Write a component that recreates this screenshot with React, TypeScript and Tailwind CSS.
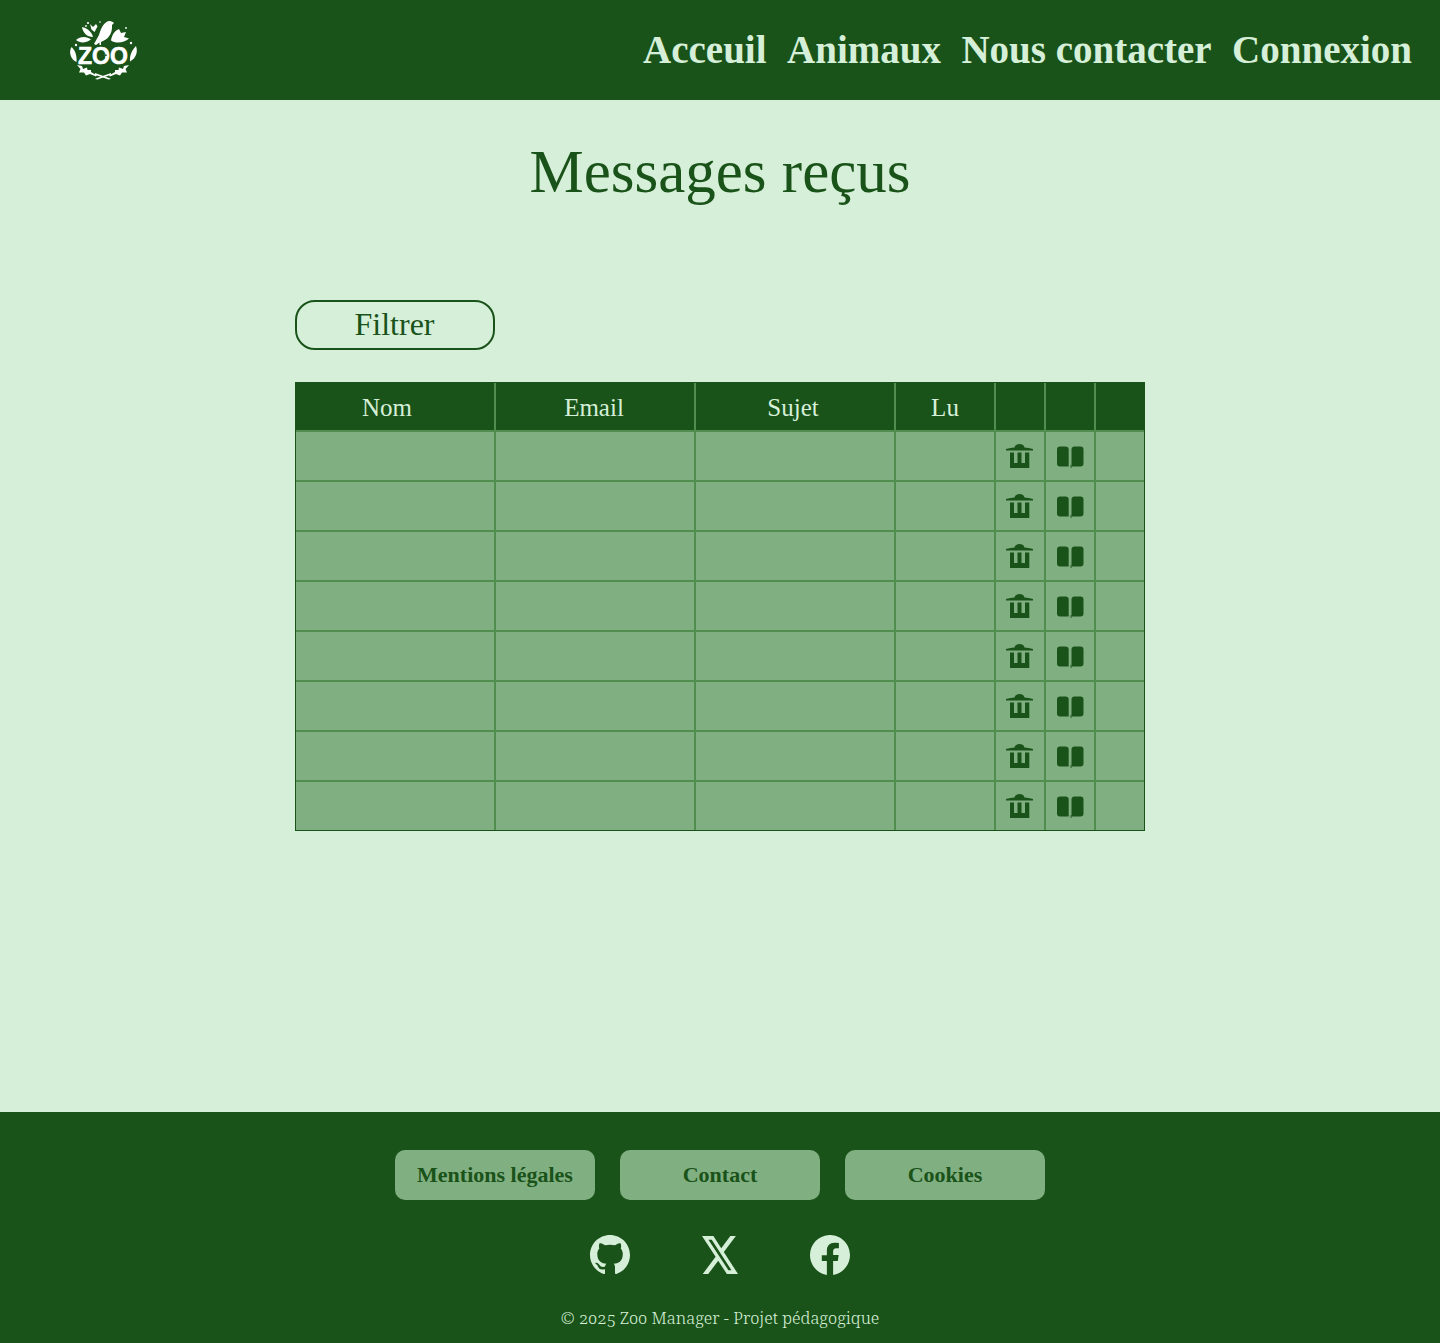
import { BsGithub, BsFacebook, BsTwitterX } from 'react-icons/bs'

const serif = 'font-["Liberation_Serif",serif]'

function Logo() {
  return (
    <svg viewBox="0 0 70 60" className="h-[60px] w-[70px]" fill="#ffffff">
      {/* bird */}
      <path d="M26 24 L31 15 C33 8 36 2 41 1 C43 0.7 45 2 46 3 L44 5 C44.5 13 41 18 36 20.5 L33 22 L33 25 L31.5 25 L31.5 22.5 L28 25 Z" />
      {/* leaves, top */}
      <path d="M14 7 C19 8 24 12 25 17 C19 17 15 13 14 7 Z" />
      <path d="M8 20 C12 16 19 16 23 19.5 C18 23 12 23.5 8 20 Z" />
      <path d="M22 4 L25 7 L28 4 L29.5 6.5 L26.5 12 L23.5 9.5 Z" />
      <path d="M43 20.5 C44 14.5 47 10.5 51 9 L53 13 L58 12 L56 17 L61 18.5 C56 23 48 24 43 20.5 Z" />
      <circle cx="20" cy="3" r="1.1" />
      <circle cx="18" cy="6" r="0.9" />
      <circle cx="32" cy="2" r="0.8" />
      <circle cx="58" cy="8" r="0.9" />
      <circle cx="8" cy="25" r="1.2" />
      <circle cx="63" cy="23" r="1.2" />
      {/* side branches */}
      <path d="M3.5 27 C7 30 9 35 8.5 42 C3.5 40 0 33 3.5 27 Z" />
      <path d="M68 26 C70.5 33 67 39 62 41.5 C61.5 35 64 30 68 26 Z" />
      {/* bottom wreath */}
      <path d="M9 45 L14 46 L15 49 L19 47.5 L19.5 50 L23 50 L23 52 L29 55.5 L28 56.5 L22 54 L18 55.5 L16 52.5 L11 52.5 L12.5 49 Z" />
      <path d="M61 45 L56 46 L55 49 L51 47.5 L50.5 50 L47 50 L47 52 L41 55.5 L42 56.5 L48 54 L52 55.5 L54 52.5 L59 52.5 L57.5 49 Z" />
      <path d="M27 53 L41 58 L43 59 L40.5 59.5 L27 54.8 Z" />
      <path d="M43 53 L29 58 L27 59 L29.5 59.5 L43 54.8 Z" />
      <text
        x="10"
        y="43.5"
        fontFamily="Liberation Sans, sans-serif"
        fontSize="23"
        fontWeight="700"
        stroke="#ffffff"
        strokeWidth="0.6"
      >
        ZOO
      </text>
      {/* paw in the first O */}
      <g fill="#1a5319">
        <ellipse cx="34.5" cy="37.2" rx="2.5" ry="2" />
        <circle cx="31.2" cy="35.2" r="0.9" />
        <circle cx="33.4" cy="33.4" r="0.9" />
        <circle cx="35.8" cy="33.4" r="0.9" />
        <circle cx="37.9" cy="35.2" r="0.9" />
      </g>
    </svg>
  )
}

function TrashIcon() {
  return (
    <svg viewBox="0 0 27 24" className="mr-[1px] h-[24px] w-[27px]" fill="#1a5319">
      <path d="M0 5 C3 4 6 3.6 8.5 3.4 C9.5 -1 17.5 -1 18.5 3.4 C21 3.6 24 4 27 5 L27 6.5 L0 6.5 Z" />
      <path d="M4 8.5 H8 V19 H11.5 V8.5 H15.5 V19 H19 V8.5 H23.3 V24 H4 Z" />
    </svg>
  )
}

function BookIcon() {
  return (
    <svg viewBox="0 0 27 22" className="mt-[1px] h-[22px] w-[27px]" fill="#1a5319">
      <path d="M3 0.5 H8.5 C10.5 0.5 11.7 1.7 11.7 3.5 V20.5 H3 C1 20.5 0 19.5 0 17.5 V3.5 C0 1.5 1 0.5 3 0.5 Z" />
      <path d="M14.5 3.5 C14.5 1.7 15.7 0.5 17.5 0.5 H23.5 C25.5 0.5 26.5 1.5 26.5 3.5 V17.5 C26.5 19.5 25.5 20.5 23.5 20.5 H14.5 Z" />
      <path d="M13.6 19 H14.5 V22 H13.6 Z" />
    </svg>
  )
}

const rows = [0, 1, 2, 3, 4, 5, 6, 7]
const cell = 'border-r-2 border-b-2 border-[#508d4e]'
const lastRowCell = 'border-r-2 border-[#508d4e]'

function App() {
  return (
    <div className={`flex min-h-screen flex-col bg-[#d6efd8] ${serif}`}>
      <header className="flex h-[100px] items-center justify-between bg-[#1a5319] pl-[68px] pr-[28px]">
        <Logo />
        <nav className="flex gap-[20.5px] pt-[1px] text-[39px] font-bold text-[#d6efd8]">
          <a>Acceuil</a>
          <a>Animaux</a>
          <a>Nous contacter</a>
          <a>Connexion</a>
        </nav>
      </header>

      <main className="flex flex-1 flex-col items-center text-[#1a5319]">
        <h1 className="mt-[34px] text-[61px] leading-[76px]">Messages reçus</h1>
        <div className="mt-[90px] w-[850px]">
          <button className="h-[50px] w-[200px] rounded-[20px] border-2 border-[#1a5319] pb-[2px] pr-[1px] text-[32px] leading-[44px]">
            Filtrer
          </button>
          <div className="mt-[32px] border border-[#1a5319]">
            <table className="w-[848px] table-fixed border-separate border-spacing-0">
              <colgroup>
                <col className="w-[200px]" />
                <col className="w-[200px]" />
                <col className="w-[200px]" />
                <col className="w-[100px]" />
                <col className="w-[50px]" />
                <col className="w-[50px]" />
                <col className="w-[48px]" />
              </colgroup>
              <thead>
                <tr className="h-[49px] bg-[#1a5319] text-center text-[25px] text-[#d6efd8]">
                  <th className={`${cell} pr-[16px] pt-[2px] font-normal`}>Nom</th>
                  <th className={`${cell} pr-[2px] pt-[2px] font-normal`}>Email</th>
                  <th className={`${cell} pr-[4px] pt-[2px] font-normal`}>Sujet</th>
                  <th className={`${cell} pt-[2px] font-normal`}>Lu</th>
                  <th className={cell}></th>
                  <th className={cell}></th>
                  <th className="border-b-2 border-[#508d4e]"></th>
                </tr>
              </thead>
              <tbody>
                {rows.map((r) => {
                  const last = r === rows.length - 1
                  const c = last ? lastRowCell : cell
                  return (
                    <tr key={r} className={`${last ? 'h-[48px]' : 'h-[50px]'} bg-[#80af81]`}>
                      <td className={c}></td>
                      <td className={c}></td>
                      <td className={c}></td>
                      <td className={c}></td>
                      <td className={c}>
                        <div className="flex justify-center">
                          <TrashIcon />
                        </div>
                      </td>
                      <td className={c}>
                        <div className="flex justify-center">
                          <BookIcon />
                        </div>
                      </td>
                      <td className={last ? '' : 'border-b-2 border-[#508d4e]'}></td>
                    </tr>
                  )
                })}
              </tbody>
            </table>
          </div>
        </div>
      </main>

      <footer className="flex h-[231px] flex-col items-center bg-[#1a5319] pt-[38px] text-[#d6efd8]">
        <div className="flex gap-[25px]">
          {['Mentions légales', 'Contact', 'Cookies'].map((t) => (
            <a
              key={t}
              className="flex h-[50px] w-[200px] items-center justify-center rounded-[10px] bg-[#80af81] pb-[2px] text-[22px] font-bold text-[#1a5319]"
            >
              {t}
            </a>
          ))}
        </div>
        <div className="mt-[35px] flex h-[40px] items-center gap-[70px] text-[40px]">
          <BsGithub />
          <div className="flex w-[40px] justify-center">
            <BsTwitterX preserveAspectRatio="none" className="h-[42px] w-[36px]" />
          </div>
          <BsFacebook />
        </div>
        <p className='mt-[31px] font-["Noto_Serif",serif] text-[16.5px] font-light [font-variant-numeric:oldstyle-nums]'>
          © 2025 Zoo Manager - Projet pédagogique
        </p>
      </footer>
    </div>
  )
}

export default App
